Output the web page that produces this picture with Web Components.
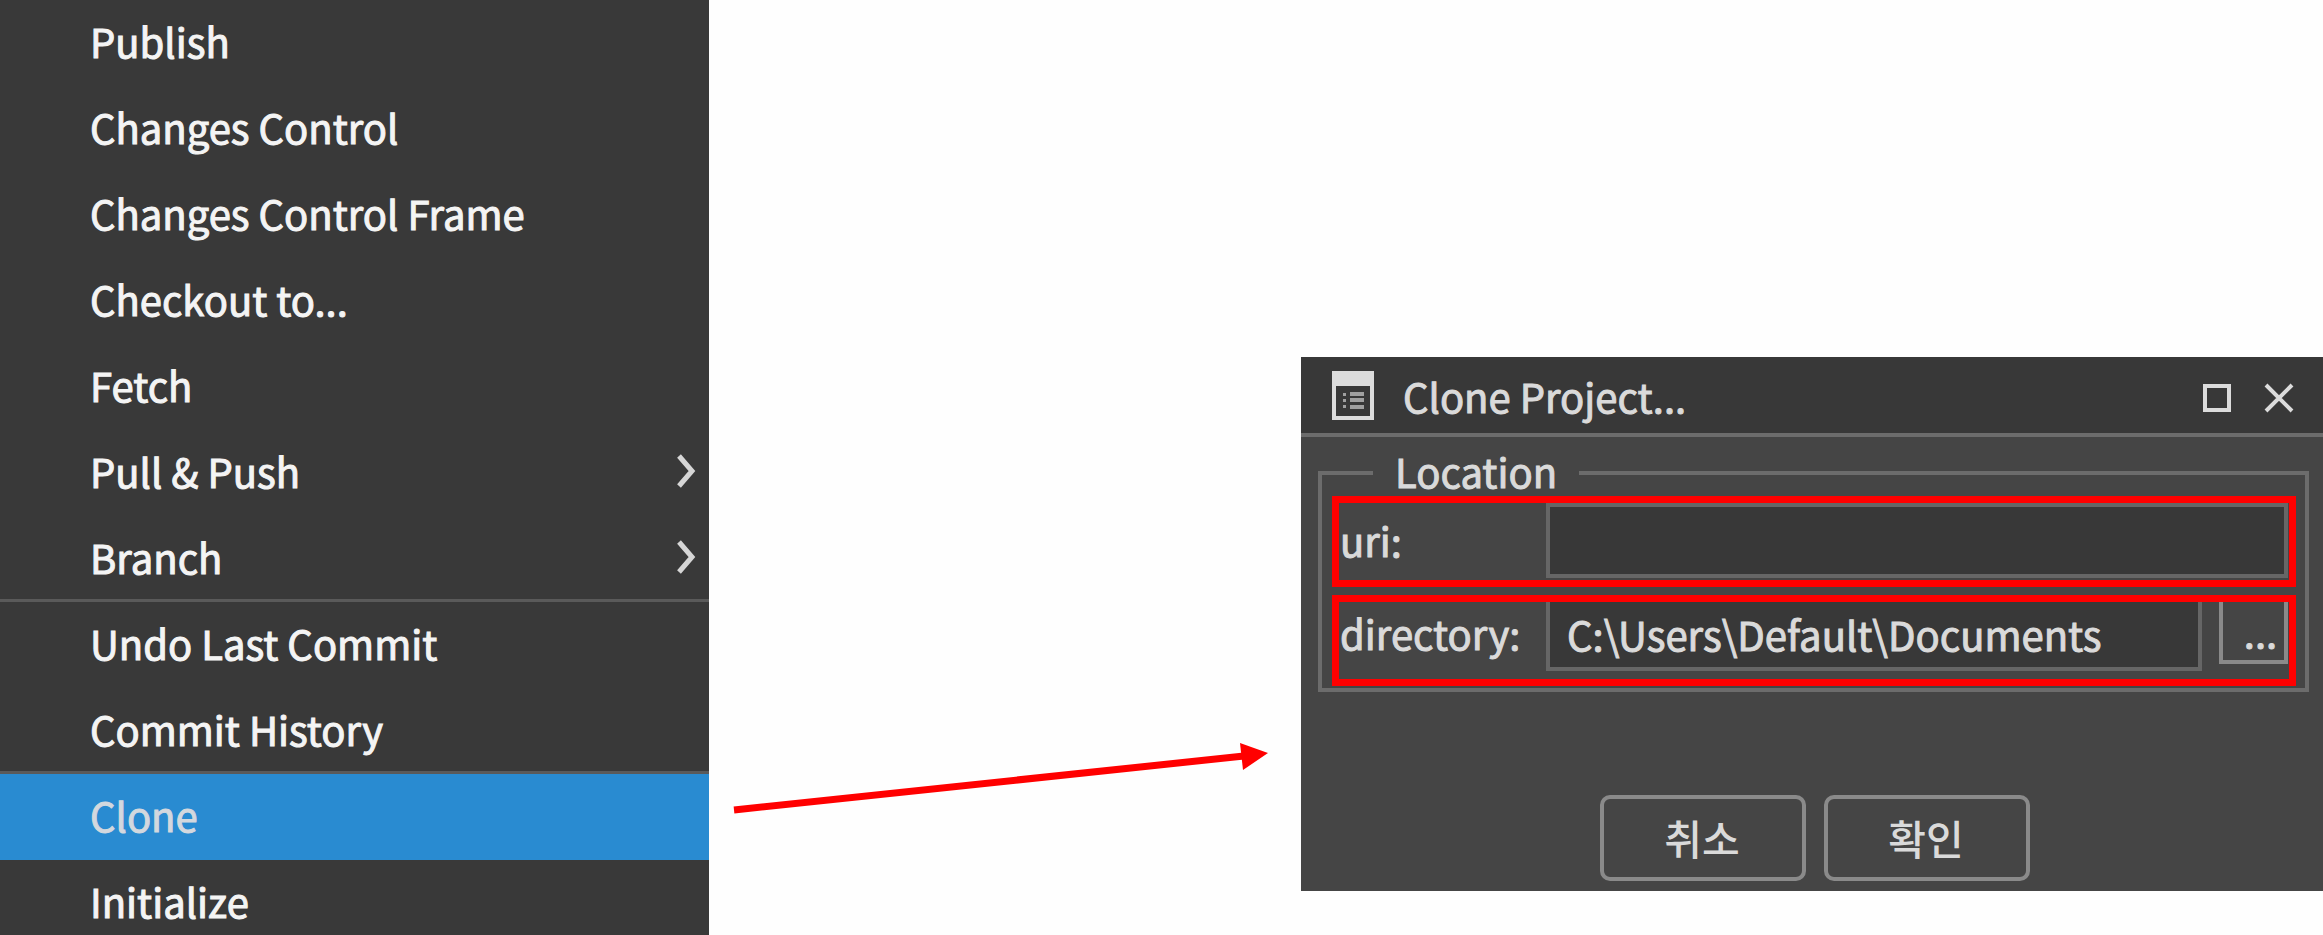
<!DOCTYPE html>
<html lang="en">
<head>
<meta charset="utf-8">
<title>Clone Project</title>
<style>
  body { margin: 0; background: #fefefe; font-family: "Noto Sans CJK KR", "Noto Sans", sans-serif; }
</style>
</head>
<body>
<guide-page>
  <git-menu slot="menu">
    <menu-entry>Publish</menu-entry>
    <menu-entry>Changes Control</menu-entry>
    <menu-entry>Changes Control Frame</menu-entry>
    <menu-entry>Checkout to...</menu-entry>
    <menu-entry>Fetch</menu-entry>
    <menu-entry submenu>Pull &amp; Push</menu-entry>
    <menu-entry submenu divider>Branch</menu-entry>
    <menu-entry>Undo Last Commit</menu-entry>
    <menu-entry divider>Commit History</menu-entry>
    <menu-entry selected>Clone</menu-entry>
    <menu-entry>Initialize</menu-entry>
  </git-menu>
  <flow-arrow slot="arrow"></flow-arrow>
  <clone-dialog slot="dialog">
    <span slot="title">Clone Project...</span>
    <field-group>
      <span slot="legend">Location</span>
      <field-row label="uri:"></field-row>
      <field-row label="directory:" value="C:\Users\Default\Documents" browse></field-row>
    </field-group>
    <dialog-button slot="actions" lang="ko">취소</dialog-button>
    <dialog-button slot="actions" lang="ko">확인</dialog-button>
  </clone-dialog>
</guide-page>

<script>
const define = (name, html, setup) => {
  const template = document.createElement('template');
  template.innerHTML = html;
  customElements.define(name, class extends HTMLElement {
    constructor() {
      super();
      this.attachShadow({ mode: 'open' }).append(template.content.cloneNode(true));
    }
    connectedCallback() { if (setup) setup(this, this.shadowRoot); }
  });
};

define('guide-page', `
  <style>
    :host { display: grid; grid-template-columns: 709fr 592fr 1022fr; height: 100vh; overflow: hidden; }
    ::slotted([slot="arrow"]) { align-self: end; margin-bottom: 120px; }
    ::slotted([slot="dialog"]) { align-self: end; margin-bottom: 44px; }
  </style>
  <slot name="menu"></slot><slot name="arrow"></slot><slot name="dialog"></slot>`);

define('git-menu', `
  <style>
    :host { display: block; min-width: 0; overflow: hidden; background: #393939; }
    nav { display: flex; flex-direction: column; }
  </style>
  <nav aria-label="Git"><slot></slot></nav>`);

define('menu-entry', `
  <style>
    :host { display: block; }
    button {
      display: flex; align-items: center; justify-content: space-between;
      box-sizing: border-box; width: 100%; height: 86px; padding: 0 13px 2px 90px;
      border: 0; border-bottom: 3px solid transparent; background: none;
      color: #f4f4f4; font-family: inherit; font-size: 40px; text-align: left;
      -webkit-text-stroke: 1px currentColor;
    }
    svg { display: none; width: 20px; height: 36px; fill: none; stroke: #d6d6d6; stroke-width: 5; }
    :host([submenu]) svg { display: block; }
    :host([divider]) button { border-bottom-color: #5a5a5a; }
    :host([selected]) button { background: #298bd1; color: #d3d8de; }
  </style>
  <button type="button"><slot></slot><svg viewBox="0 0 20 36" aria-hidden="true"><path d="M3 3L16 18L3 33"/></svg></button>`);

define('flow-arrow', `
  <style>
    :host { display: block; }
    svg { display: block; width: 100%; }
  </style>
  <svg viewBox="0 0 592 80" aria-hidden="true">
    <path d="M25 75L535 21" fill="none" stroke="#f00" stroke-width="7"/>
    <path d="M531 8L559 18L534 35Z" fill="#f00"/>
  </svg>`);

define('clone-dialog', `
  <style>
    :host { display: block; background: #454545; color: #dadada; -webkit-text-stroke: 1px #dadada; }
    header {
      display: flex; align-items: center; box-sizing: border-box; height: 80px;
      padding: 2px 29px 0 31px; border-bottom: 4px solid #6c6c6c; background: #383838;
    }
    h1 { flex: 1; margin: 0 0 0 29px; font-size: 40px; line-height: 56px; font-weight: 400; }
    .icon { width: 42px; height: 50px; }
    button { display: flex; padding: 4px 0 0; border: 0; background: none; }
    button + button { margin-left: 32px; }
    button svg { width: 30px; height: 30px; fill: none; stroke: #dcdcdc; stroke-width: 4; }
    main { padding: 14px 14px 0 17px; }
    footer { display: flex; justify-content: center; gap: 18px; padding: 103px 0 10px 6px; }
  </style>
  <section role="dialog" aria-label="Clone Project">
    <header>
      <svg class="icon" viewBox="0 0 42 50" aria-hidden="true">
        <path d="M0 0H42V49H0Z" fill="#dcdcdc"/>
        <path d="M4 15H38V45H4Z" fill="#383838"/>
        <path d="M11 22H14V25H11ZM11 28H14V31H11ZM11 34H14V37H11ZM18 21H32V25H18ZM18 27H32V31H18ZM18 34H32V38H18Z" fill="#a0a0a0"/>
      </svg>
      <h1><slot name="title"></slot></h1>
      <button type="button" aria-label="Maximize"><svg viewBox="0 0 30 30"><path d="M3 3H27V27H3Z"/></svg></button>
      <button type="button" aria-label="Close"><svg viewBox="0 0 30 30"><path d="M2 2L28 28M28 2L2 28"/></svg></button>
    </header>
    <main><slot></slot></main>
    <footer><slot name="actions"></slot></footer>
  </section>`);

define('field-group', `
  <style>
    :host { display: block; }
    fieldset { display: grid; gap: 8px; min-width: 0; margin: 0; padding: 1px 9px 2px 10px; border: 4px solid #6c6c6c; }
    legend { margin-left: 41px; padding: 0 22px 4px 22px; font-size: 40px; line-height: 40px; }
  </style>
  <fieldset><legend><slot name="legend"></slot></legend><slot></slot></fieldset>`);

define('field-row', `
  <style>
    :host { position: relative; display: block; box-sizing: border-box; height: 91px; padding: 7px 8px 0 7px; }
    :host([browse]) { padding-top: 1px; }
    :host::after { content: ""; position: absolute; inset: 0; border: 7px solid #f00; pointer-events: none; }
    div { display: grid; grid-template-columns: 207px 1fr; align-items: start; }
    :host([browse]) div { grid-template-columns: 207px 1fr 69px; }
    label { padding-left: 1px; font-size: 40px; line-height: 75px; }
    input {
      box-sizing: border-box; width: 100%; min-width: 0; height: 75px; padding: 0 17px;
      border: 4px solid #666; border-radius: 0; background: #383838; color: #dadada;
      font-family: inherit; font-size: 40px; -webkit-text-stroke: inherit;
    }
    button {
      display: none; box-sizing: border-box; height: 68px; padding: 2px 0 0 14px; border: 4px solid #8a8a8a;
      background: none; color: #dadada; font-family: inherit; font-size: 40px; line-height: 56px;
    }
    :host([browse]) input { width: calc(100% - 17px); }
    :host([browse]) button { display: block; }
  </style>
  <div><label for="field"></label><input id="field" type="text"><button type="button" aria-label="Browse">...</button></div>`,
  (host, root) => {
    root.querySelector('label').textContent = host.getAttribute('label');
    root.querySelector('input').value = host.getAttribute('value') || '';
  });

define('dialog-button', `
  <style>
    :host { display: block; -webkit-text-stroke: 0; }
    button {
      box-sizing: border-box; width: 206px; height: 86px; padding: 0 2px 2px 0; border: 4px solid #8a8a8a; border-radius: 10px;
      background: none; color: #dadada; font-family: inherit; font-size: 41px; font-weight: 500;
    }
  </style>
  <button type="button"><slot></slot></button>`);
</script>
</body>
</html>
